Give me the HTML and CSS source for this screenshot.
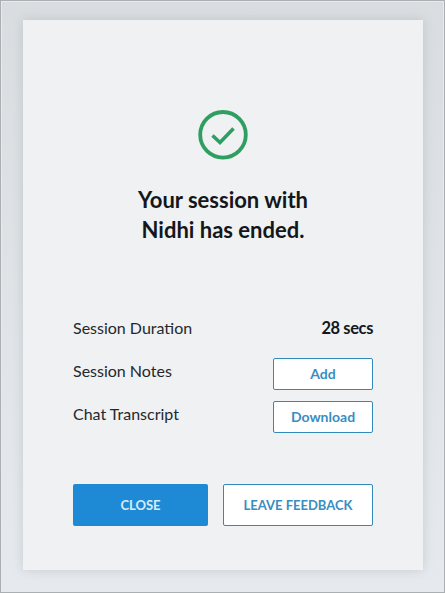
FILE: index.html
```html
<!DOCTYPE html>
<html lang="en">
<head>
<meta charset="utf-8">
<title>Session ended</title>
<link rel="stylesheet" href="styles.css">
</head>
<body>
<div class="frame">
  <main class="card">
    <svg class="check" width="50" height="50" viewBox="0 0 50 50" aria-hidden="true">
      <circle cx="25" cy="24.8" r="22.8" fill="none" stroke="#2f9e62" stroke-width="3.8"/>
      <path d="M14.5 25.5 L22 32.5 L35.5 18.5" fill="none" stroke="#2f9e62" stroke-width="3.6"/>
    </svg>
    <h1 class="title">Your session with<br>Nidhi has ended.</h1>
    <div class="details">
      <div class="row row-duration"><span>Session Duration</span><strong class="value">28 secs</strong></div>
      <div class="row row-notes"><span class="label">Session Notes</span><button class="small-btn">Add</button></div>
      <div class="row row-chat"><span class="label">Chat Transcript</span><button class="small-btn">Download</button></div>
    </div>
    <div class="actions">
      <button class="btn btn-primary">CLOSE</button>
      <button class="btn btn-outline">LEAVE FEEDBACK</button>
    </div>
  </main>
</div>
</body>
</html>
```
FILE: styles.css
```css
* { box-sizing: border-box; }
html, body { margin: 0; padding: 0; }
body {
  width: 445px;
  height: 593px;
  overflow: hidden;
  font-family: Lato, "Liberation Sans", sans-serif;
  background: #dfe3e6;
}
.frame {
  width: 445px;
  height: 593px;
  padding: 19px 21px 21px 22px;
  border: 1px solid #a9afb3;
  box-shadow: inset 0 0 0 1px #e8ebed;
  background: linear-gradient(#d9dde0, #e6eaee);
  display: flex;
}
.card {
  width: 400px;
  height: 550px;
  background: #eff1f3;
  box-shadow: 0 0 10px rgba(150, 160, 170, 0.4);
  padding: 90px 50px 0;
  display: flex;
  flex-direction: column;
  align-items: center;
}
.check { display: block; flex: none; }
.title {
  margin: 25px 0 0;
  font-size: 22px;
  line-height: 30px;
  font-weight: 700;
  color: #14171a;
  text-align: center;
}
.details {
  width: 300px;
  margin-top: 73px;
  font-size: 16px;
  color: #24282c;
}
.row {
  display: flex;
  justify-content: space-between;
  align-items: flex-start;
}
.row-duration { height: 40px; line-height: 20px; }
.row-notes { height: 43px; }
.row-chat { height: 32px; }
.label { line-height: 20px; margin-top: 3px; }
.value { font-size: 16.5px; font-weight: 700; color: #14171a; letter-spacing: -0.4px; }
.small-btn {
  width: 100px;
  height: 32px;
  padding: 0 0 2px;
  border: 1px solid #3289bb;
  border-radius: 2px;
  background: #fff;
  color: #3a8dbf;
  font: 700 14px Lato, "Liberation Sans", sans-serif;
}
.actions {
  width: 300px;
  margin-top: 51px;
  display: flex;
  justify-content: space-between;
}
.btn {
  height: 42px;
  padding: 0;
  border-radius: 2px;
  font: 700 13px Lato, "Liberation Sans", sans-serif;
}
.btn-primary {
  width: 135px;
  border: 0;
  background: #1e8ad6;
  color: #d8ecf8;
}
.btn-outline {
  width: 150px;
  border: 1px solid #3289bb;
  background: #fff;
  color: #3a8dbf;
}
```
